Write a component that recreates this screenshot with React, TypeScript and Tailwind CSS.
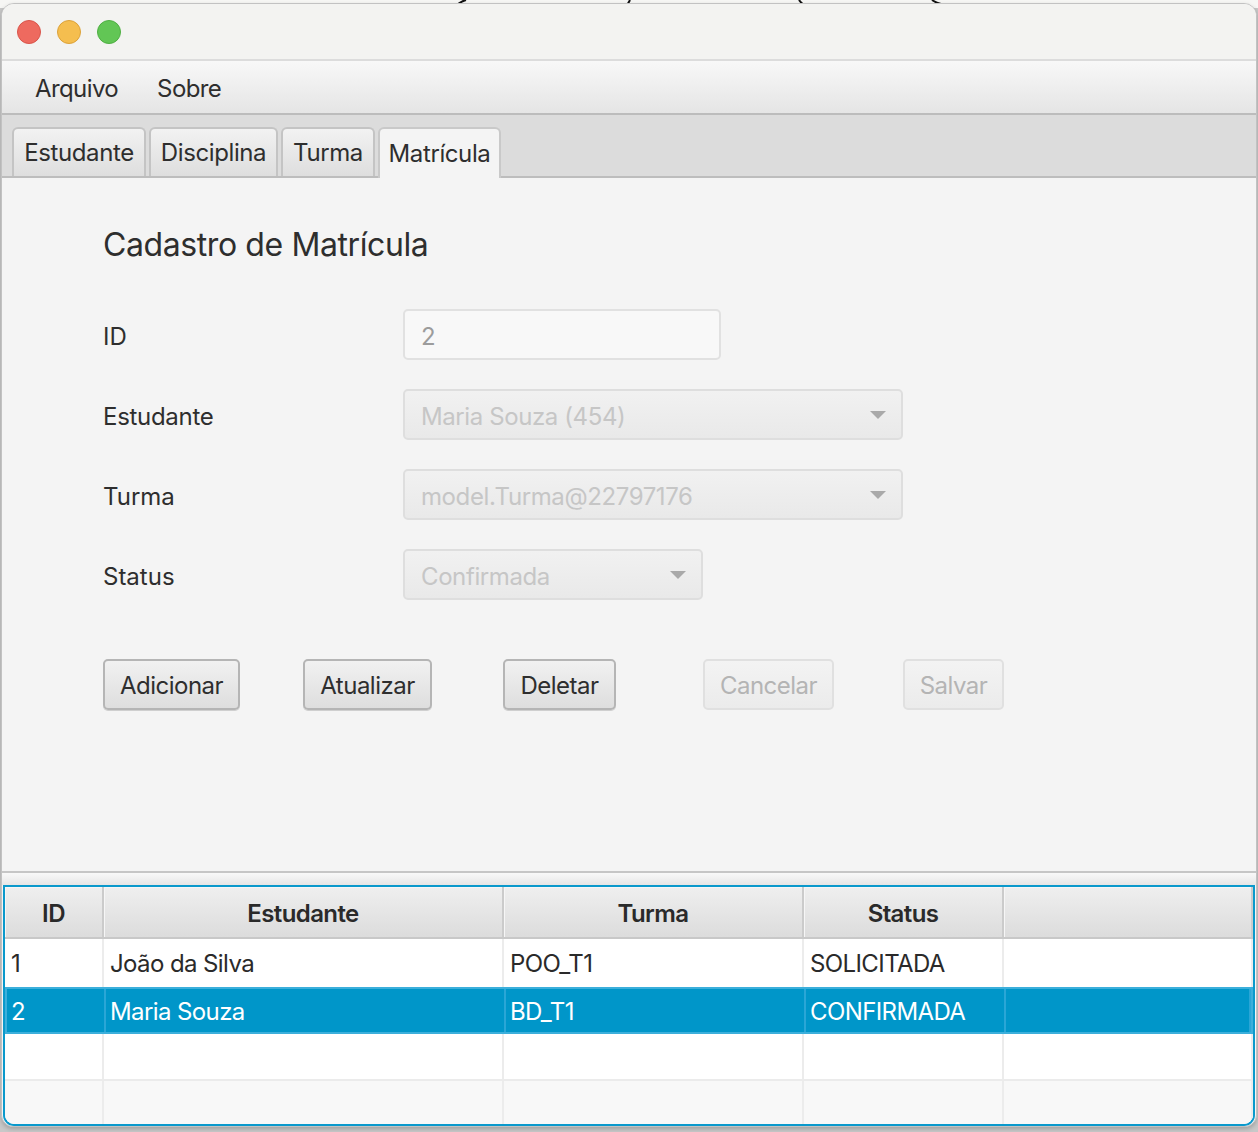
import React from "react";

const Caret = () => (
  <svg width="18" height="10" viewBox="0 0 18 10" className="shrink-0">
    <path d="M1 1 L17 1 L9 9 Z" fill="#a9a9a9" />
  </svg>
);

const Combo = ({ text, w }: { text: string; w: string }) => (
  <div
    className={`${w} h-[51px] rounded-[5px] border-2 border-[#dedede] bg-gradient-to-b from-[#f1f1f1] to-[#e9e9e9] flex items-center justify-between pl-[16px] pr-[14px]`}
  >
    <span className="text-[24px] text-[#c6c6c6] tracking-[-0.4px] pt-[4px]">{text}</span>
    <Caret />
  </div>
);

const Btn = ({ label, w, disabled }: { label: string; w: string; disabled?: boolean }) => (
  <div className="w-[200px]">
    <div
      className={
        disabled
          ? `${w} h-[51px] pt-[3px] rounded-[5px] border-2 border-[#e0e0e0] bg-gradient-to-b from-[#f3f3f3] to-[#ebebeb] flex items-center justify-center text-[24px] text-[#b4b4b4] tracking-[-0.5px]`
          : `${w} h-[51px] pt-[3px] rounded-[5px] border-2 border-[#b5b5b5] bg-gradient-to-b from-[#f1f1f1] to-[#dedede] shadow-[0_1px_0_#cfcfcf] flex items-center justify-center text-[24px] text-[#2e2e2e] tracking-[-0.5px]`
      }
    >
      {label}
    </div>
  </div>
);

const Tab = ({ label, w, selected }: { label: string; w: string; selected?: boolean }) => (
  <div
    className={
      selected
        ? `${w} h-[51px] -mb-[2px] rounded-t-[6px] border-2 border-b-0 border-[#c9c9c9] bg-[#f4f4f4] flex items-center justify-center text-[24px] text-[#2e2e2e] z-10`
        : `${w} h-[49px] rounded-t-[6px] border-2 border-b-0 border-[#c4c4c4] bg-gradient-to-b from-[#f2f2f2] to-[#dedede] flex items-center justify-center text-[24px] text-[#2e2e2e]`
    }
  >
    {label}
  </div>
);

const cols = "grid grid-cols-[99px_400px_300px_200px_1fr]";

export default function App() {
  const rows = [
    ["1", "João da Silva", "POO_T1", "SOLICITADA"],
    ["2", "Maria Souza", "BD_T1", "CONFIRMADA"],
  ];
  return (
    <div className="w-[1258px] h-[1132px] bg-[#c8c8c8] relative overflow-hidden font-['Inter','Liberation_Sans',sans-serif]">
      {/* desktop strip above window */}
      <div className="absolute top-0 left-0 w-full h-[8px] bg-[#f6f6f4]">
        <svg width="1258" height="8" className="absolute top-0 left-0">
          <path d="M458 4 Q462 1 466 0" stroke="#111" strokeWidth="2" fill="none" />
          <path d="M627 5 Q629 2 630 0" stroke="#111" strokeWidth="2" fill="none" />
          <path d="M799 0 Q801 3 804 5" stroke="#111" strokeWidth="2" fill="none" />
          <path d="M932 0 Q936 3 941 4" stroke="#111" strokeWidth="2" fill="none" />
        </svg>
      </div>

      <div className="absolute top-[3px] left-[1px] w-[1256px] h-[1124px] rounded-t-[13px] rounded-b-[12px] border border-[#c2c2c2] overflow-hidden flex flex-col bg-[#f4f4f4] shadow-[0_2px_4px_rgba(0,0,0,0.2)]">
        {/* title bar */}
        <div className="h-[57px] shrink-0 bg-[#f3f3f1] border-b-2 border-[#dcdcdc] flex items-center pl-[15px] gap-[16px]">
          <div className="w-[24px] h-[24px] rounded-full bg-[#ee6a5f] border border-[#d9554b]" />
          <div className="w-[24px] h-[24px] rounded-full bg-[#f5be4f] border border-[#dca23a]" />
          <div className="w-[24px] h-[24px] rounded-full bg-[#62c655] border border-[#4faf43]" />
        </div>

        {/* menu bar */}
        <div className="h-[54px] shrink-0 pt-[4px] bg-gradient-to-b from-[#f8f8f8] to-[#e5e5e5] border-b-2 border-[#bcbcbc] flex items-center pl-[33px] gap-[39px] text-[24px] text-[#2e2e2e] tracking-[-0.6px]">
          <span>Arquivo</span>
          <span>Sobre</span>
        </div>

        {/* tab bar */}
        <div className="h-[63px] shrink-0 bg-[#dcdcdc] border-b-2 border-[#bdbdbd] flex items-end pl-[10px] gap-[3px] tracking-[-0.4px]">
          <Tab label="Estudante" w="w-[134px]" />
          <Tab label="Disciplina" w="w-[129px]" />
          <Tab label="Turma" w="w-[94px]" />
          <Tab label="Matrícula" w="w-[123px]" selected />
        </div>

        {/* form */}
        <div className="h-[693px] shrink-0 pl-[101px] pt-[47px] text-[#2e2e2e]">
          <div className="text-[32px] leading-[40px] tracking-[-0.4px]">Cadastro de Matrícula</div>
          <div className="mt-[44px] flex flex-col gap-[29px]">
            <div className="flex items-center h-[51px]">
              <div className="w-[300px] text-[24px] pt-[4px]">ID</div>
              <div className="w-[318px] h-[51px] pt-[4px] rounded-[5px] border-2 border-[#e1e1e1] bg-[#f8f8f8] flex items-center pl-[16px] text-[24px] text-[#9c9c9c]">
                2
              </div>
            </div>
            <div className="flex items-center h-[51px]">
              <div className="w-[300px] text-[24px] pt-[4px] tracking-[-0.3px]">Estudante</div>
              <Combo text="Maria Souza (454)" w="w-[500px]" />
            </div>
            <div className="flex items-center h-[51px]">
              <div className="w-[300px] text-[24px] pt-[4px]">Turma</div>
              <Combo text="model.Turma@22797176" w="w-[500px]" />
            </div>
            <div className="flex items-center h-[51px]">
              <div className="w-[300px] text-[24px] pt-[4px]">Status</div>
              <Combo text="Confirmada" w="w-[300px]" />
            </div>
          </div>
          <div className="mt-[59px] flex">
            <Btn label="Adicionar" w="w-[137px]" />
            <Btn label="Atualizar" w="w-[129px]" />
            <Btn label="Deletar" w="w-[113px]" />
            <Btn label="Cancelar" w="w-[131px]" disabled />
            <Btn label="Salvar" w="w-[101px]" disabled />
          </div>
        </div>

        {/* split divider */}
        <div className="h-[14px] shrink-0 border-t-2 border-[#c6c6c6] bg-gradient-to-b from-[#f9f9f9] to-[#e6e6e6]" />

        {/* table */}
        <div className="flex-1 mx-[1px] border-2 border-[#0a99cc] rounded-b-[11px] overflow-hidden bg-white flex flex-col">
          <div className={`${cols} h-[52px] shrink-0 border-b-2 border-[#c8c8c8] bg-gradient-to-b from-[#efefef] to-[#dcdcdc]`}>
            {["ID", "Estudante", "Turma", "Status", ""].map((h, i) => (
              <div
                key={i}
                className="border-r-2 border-[#cbcbcb] shadow-[inset_1px_1px_0_#f6f6f6] flex items-center justify-center pt-[4px] text-[24px] font-semibold text-[#2a2a2a] tracking-[-0.6px]"
              >
                {h}
              </div>
            ))}
          </div>
          {rows.map((r, ri) => {
            const sel = ri === 1;
            return (
              <div
                key={ri}
                className={
                  sel
                    ? `${cols} h-[47px] shrink-0 bg-[#0096c9] border-2 border-[#3cafdb] text-white`
                    : `${cols} h-[48px] shrink-0 bg-white text-[#2a2a2a]`
                }
              >
                {[...r, ""].map((c, ci) => (
                  <div
                    key={ci}
                    className={
                      sel
                        ? `border-r-2 border-[#2aa6d6] flex items-center pt-[2px] ${ci === 0 ? "pl-[4px]" : "pl-[4px]"} text-[24px] tracking-[-0.6px]`
                        : `border-r-2 border-[#ececec] flex items-center pt-[2px] pl-[6px] text-[24px] tracking-[-0.6px]`
                    }
                  >
                    {c}
                  </div>
                ))}
              </div>
            );
          })}
          <div className={`${cols} h-[47px] shrink-0 bg-white border-b-2 border-[#ebebeb]`}>
            {[0, 1, 2, 3, 4].map((i) => (
              <div key={i} className="border-r-2 border-[#ececec]" />
            ))}
          </div>
          <div className={`${cols} flex-1 bg-[#f8f8f8]`}>
            {[0, 1, 2, 3, 4].map((i) => (
              <div key={i} className="border-r-2 border-[#ececec]" />
            ))}
          </div>
        </div>
      </div>
    </div>
  );
}
